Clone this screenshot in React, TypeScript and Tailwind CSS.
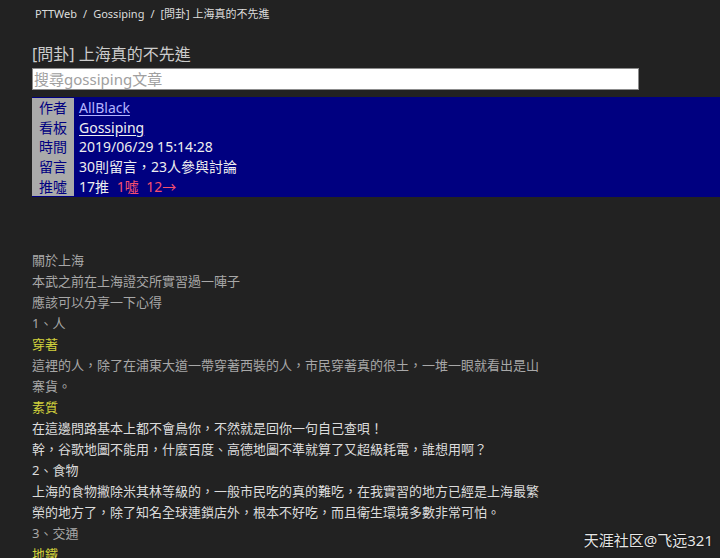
import React from 'react';

const font = { fontFamily: '"Noto Sans", "Noto Sans CJK TC", sans-serif' };

const meta = [
    { label: '作者', value: <a className="text-[#b4b4ff] underline underline-offset-2">AllBlack</a> },
    { label: '看板', value: <a className="text-[#f0f0f0] underline underline-offset-2">Gossiping</a> },
    { label: '時間', value: <span>2019/06/29 15:14:28</span> },
    { label: '留言', value: <span>30則留言，23人參與討論</span> },
    {
        label: '推噓',
        value: (
            <span>
                17推 <span className="ml-1 text-[#f5506e]">1噓</span> <span className="ml-1 text-[#f5506e]">12→</span>
            </span>
        ),
    },
];

// c: g = gray, w = bright, y = yellow
const lines: { t: string; c: 'g' | 'w' | 'y' }[] = [
    { t: '關於上海', c: 'g' },
    { t: '本武之前在上海證交所實習過一陣子', c: 'g' },
    { t: '應該可以分享一下心得', c: 'g' },
    { t: '1、人', c: 'g' },
    { t: '穿著', c: 'y' },
    { t: '這裡的人，除了在浦東大道一帶穿著西裝的人，市民穿著真的很土，一堆一眼就看出是山', c: 'g' },
    { t: '寨貨。', c: 'g' },
    { t: '素質', c: 'y' },
    { t: '在這邊問路基本上都不會鳥你，不然就是回你一句自己查唄！', c: 'w' },
    { t: '幹，谷歌地圖不能用，什麼百度、高德地圖不準就算了又超級耗電，誰想用啊？', c: 'w' },
    { t: '2、食物', c: 'w' },
    { t: '上海的食物撇除米其林等級的，一般市民吃的真的難吃，在我實習的地方已經是上海最繁', c: 'w' },
    { t: '榮的地方了，除了知名全球連鎖店外，根本不好吃，而且衛生環境多數非常可怕。', c: 'w' },
    { t: '3、交通', c: 'g' },
    { t: '地鐵', c: 'y' },
];

const colorOf = { g: 'text-[#a8a8a8]', w: 'text-[#dcdcdc]', y: 'text-[#d2d23c]' };

export default function App() {
    return (
        <div className="relative h-[558px] w-[720px] overflow-hidden bg-[#222222]" style={font}>
            {/* Breadcrumb */}
            <div className="flex h-[28px] items-center gap-[6px] pl-[35px] text-[11px] text-[#dddddd]">
                <span>PTTWeb</span>
                <span>/</span>
                <span>Gossiping</span>
                <span>/</span>
                <span>[問卦] 上海真的不先進</span>
            </div>

            <div className="pl-[32px]">
                {/* Title */}
                <h1 className="mt-[12px] h-[28px] text-[16px] leading-[28px] text-[#cccccc]">[問卦] 上海真的不先進</h1>

                {/* Search */}
                <div className="flex h-[22px] w-[607px] items-center border border-[#8c8c8c] bg-white pl-[1px] text-[15px] text-[#a0a0a0]">
                    搜尋gossiping文章
                </div>

                {/* Meta header */}
                <div className="mt-[7px] w-[720px] bg-[#000080] py-[1px]">
                    {meta.map((m) => (
                        <div key={m.label} className="flex h-[19.6px] items-center text-[14px] text-[#eeeeee]">
                            <div className="flex h-full w-[42px] items-center justify-center bg-[#aaaaaa] text-[#000080]">{m.label}</div>
                            <div className="pl-[5px]">{m.value}</div>
                        </div>
                    ))}
                </div>

                {/* Body */}
                <div className="mt-[53px] text-[13px] leading-[21px]">
                    {lines.map((l, i) => (
                        <div key={i} className={`whitespace-nowrap ${colorOf[l.c]}`}>{l.t}</div>
                    ))}
                </div>
            </div>

            {/* Watermark */}
            <div className="absolute bottom-[7px] right-[7px] text-[15px] text-[#e6e6e6] [text-shadow:0_0_2px_#000]">天涯社区@飞远321</div>
        </div>
    );
}
